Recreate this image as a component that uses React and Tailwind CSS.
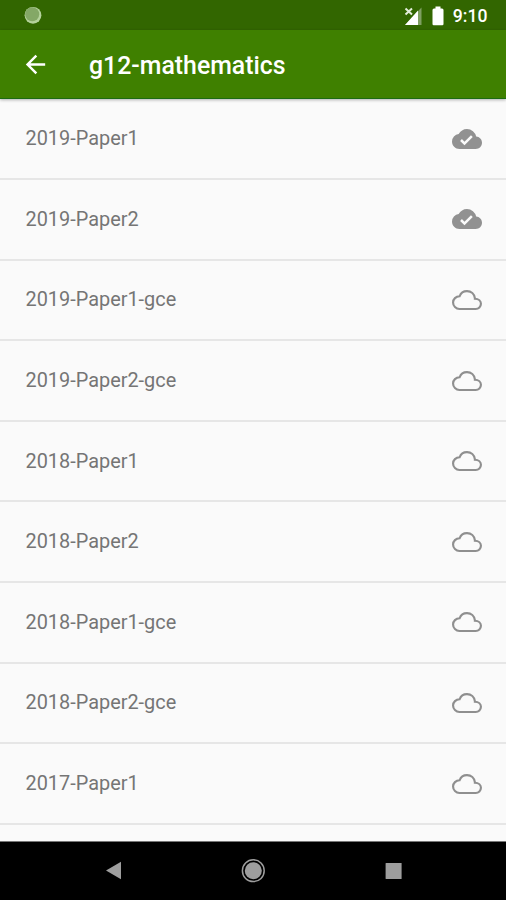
import { MdArrowBack, MdCloudDone } from "react-icons/md";

const papers = [
  { name: "2019-Paper1", saved: true },
  { name: "2019-Paper2", saved: true },
  { name: "2019-Paper1-gce", saved: false },
  { name: "2019-Paper2-gce", saved: false },
  { name: "2018-Paper1", saved: false },
  { name: "2018-Paper2", saved: false },
  { name: "2018-Paper1-gce", saved: false },
  { name: "2018-Paper2-gce", saved: false },
  { name: "2017-Paper1", saved: false },
];

function StatusBar() {
  return (
    <div className="h-[30px] shrink-0 flex items-center bg-[#326600] pl-6 pr-[18.5px] text-white">
      <svg width="18" height="18" viewBox="0 0 18 18">
        <circle cx="9" cy="9.3" r="8.4" fill="#b5d29c" />
        <circle cx="8.2" cy="8.3" r="7" fill="#84a866" />
      </svg>

      {/* Signal */}
      <svg className="ml-auto mt-px" width="18" height="20" viewBox="0 0 18 20">
        <path d="M17.500 1.500v17.500H1z" fill="#7f9f62" />
        <path d="M14 4.500V19H1z" fill="#fff" />
        <path d="M0 1h8v5.500l1 2H0z" fill="#326600" />
        <path d="M1.500 2.500l6.500 6M8 2.500L1.500 8.500" stroke="#e3edda" strokeWidth="2" />
      </svg>

      {/* Battery */}
      <svg className="ml-[10px] mt-px" width="12" height="20" viewBox="0 0 12 20">
        <path d="M3.500 .5h5v2H10q1.500 0 1.500 1.500V18Q11.500 19.200 10.300 19.200H1.700Q.5 19.200 .5 18V4Q.5 2.500 2 2.500h1.500z" fill="#fff" />
      </svg>

      <span className="ml-[9px] mt-[3px] text-[17.6px] leading-none font-medium">9:10</span>
    </div>
  );
}

function CloudOutline() {
  return (
    <svg className="size-[30px]" viewBox="0 0 24 24" fill="none" stroke="#8f8f8f" strokeWidth="1.700">
      <path d="M18.300 11V10.500C17.900 7.200 15.300 4.850 12 4.850c-2.750 0-5.050 1.650-5.900 4.150C3.100 9.050 .85 11.250 .85 14c0 2.840 2.310 5.150 5.150 5.150h13c2.290 0 4.150-1.860 4.150-4.150 0-2.250-1.850-4-4.850-4z" />
    </svg>
  );
}

function PaperRow({ paper }) {
  return (
    <li className="h-[80.6px] shrink-0 flex items-center justify-between border-b-2 border-[#e6e6e6] pl-[25.5px] pr-6">
      <span className="pt-px text-[19.9px] leading-6 text-[#757575]">{paper.name}</span>
      {paper.saved ? (
        <MdCloudDone className="size-[30px] text-[#919191]" />
      ) : (
        <CloudOutline />
      )}
    </li>
  );
}

export default function App() {
  return (
    <main className="h-screen flex flex-col overflow-hidden bg-[#fafafa] font-[Roboto,sans-serif]">
      <StatusBar />

      {/* Toolbar */}
      <header className="relative h-[69px] shrink-0 flex items-center bg-[#3f8000] pl-[20.5px] text-white border-b border-[#1d6b12] shadow-[0_1px_3px_rgba(0,0,0,0.3)]">
        <MdArrowBack className="mt-px size-[29px]" />
        <h1 className="ml-[39.500px] pt-1 text-[24.85px] leading-8 font-medium">g12-mathematics</h1>
      </header>

      <ul className="min-h-0 flex-1 flex flex-col overflow-hidden pt-[0.5px]">
        {papers.map((paper) => (
          <PaperRow key={paper.name} paper={paper} />
        ))}
      </ul>

      {/* Navigation bar */}
      <nav className="h-[59px] shrink-0 flex items-center justify-center gap-[118px] border-t border-[#777] bg-black">
        <svg width="22" height="24" viewBox="0 0 22 24">
          <path d="M20 2.800v17.500L5 11.500z" fill="#9e9e9e" />
        </svg>
        <svg width="24" height="24" viewBox="0 0 24 24" fill="none" stroke="#9e9e9e">
          <circle cx="12.300" cy="11.700" r="10.900" strokeWidth="1.500" />
          <circle cx="12.300" cy="11.700" r="8.500" fill="#9e9e9e" stroke="none" />
        </svg>
        <svg width="22" height="24" viewBox="0 0 22 24">
          <rect x="2.600" y="4" width="16" height="16" rx="0.500" fill="#9e9e9e" />
        </svg>
      </nav>
    </main>
  );
}
